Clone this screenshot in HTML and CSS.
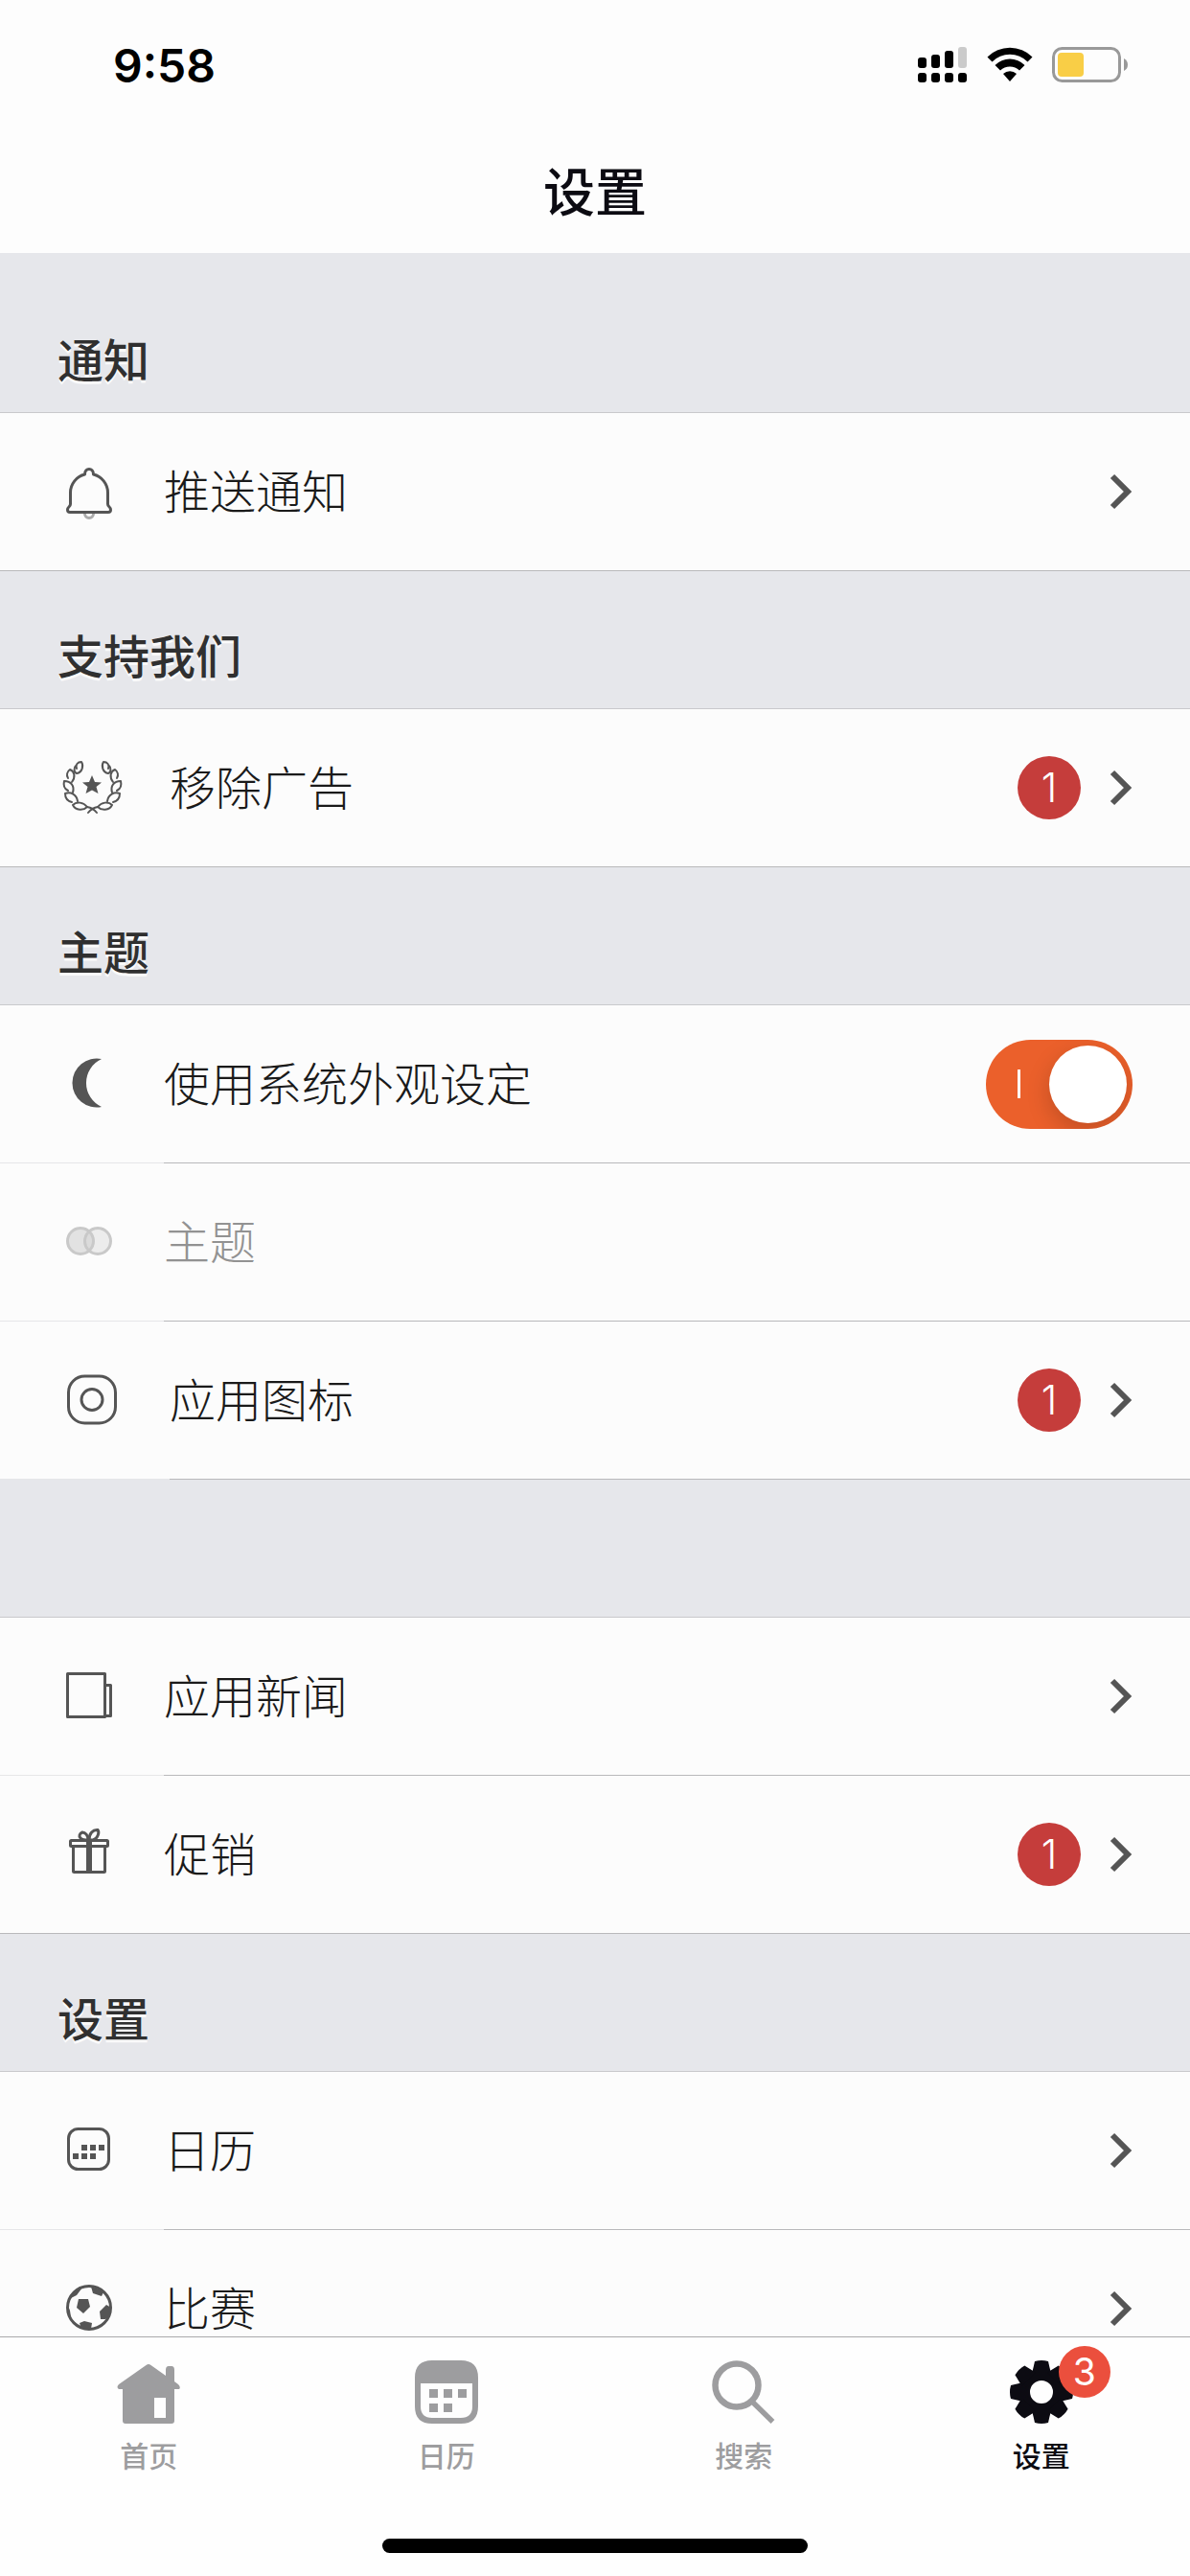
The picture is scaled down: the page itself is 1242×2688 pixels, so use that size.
FILE: index.html
```html
<!DOCTYPE html>
<html lang="zh-CN">

<head>
    <meta charset="UTF-8">
    <meta name="viewport" content="width=device-width, initial-scale=1.0">
    <title>设置</title>
    <link rel="stylesheet" href="styles.css">
</head>

<body>
    <header class="top">
        <div class="status">
            <span class="time">9:58</span>
            <div class="status-icons">
                <svg class="signal" width="52" height="38" viewBox="0 0 52 38" aria-hidden="true">
                    <rect x="0" y="11" width="9" height="11" rx="3" />
                    <rect x="14" y="8" width="9" height="14" rx="3" />
                    <rect x="28" y="4" width="9" height="18" rx="3" />
                    <rect x="42" y="0" width="9" height="22" rx="3" fill="#cbcbcb" />
                    <rect x="0" y="27" width="9" height="10" rx="3" />
                    <rect x="14" y="27" width="9" height="10" rx="3" />
                    <rect x="28" y="27" width="9" height="10" rx="3" />
                    <rect x="42" y="27" width="9" height="10" rx="3" />
                </svg>
                <svg class="wifi" width="48" height="38" viewBox="0 0 48 38" aria-hidden="true">
                    <path d="M0.500 10.500 A33.500 33.500 0 0 1 47.500 10.500 L42.500 15.500 A26 26 0 0 0 5.500 15.500 Z" />
                    <path d="M8.500 19 A22 22 0 0 1 39.500 19 L34 24.500 A14.500 14.500 0 0 0 14 24.500 Z" />
                    <path d="M17 28 A10.500 10.500 0 0 1 31 28 L24 36 Z" />
                </svg>
                <svg class="battery" width="80" height="38" viewBox="0 0 80 38" aria-hidden="true">
                    <rect x="1.500" y="1.500" width="69" height="34" rx="9" fill="none" stroke="#999" stroke-width="3" />
                    <rect x="6" y="6" width="27" height="25" rx="4" fill="#f9ce46" />
                    <path d="M75 12 Q79 14 79 18.500 Q79 23 75 25 Z" fill="#999" />
                </svg>
            </div>
        </div>
        <h1 class="title">设置</h1>
    </header>

    <main class="content">
        <section>
            <h2 class="section-title first">通知</h2>
            <ul class="list">
                <li>
                    <a class="row" href="#push">
                        <span class="icon">
                            <svg width="66" height="66" viewBox="0 0 66 66" fill="none" stroke="#555" stroke-width="3" stroke-linejoin="round" aria-hidden="true">
                                <path d="M28.500 15 C28.500 7.500 37.500 7.500 37.500 15 C46 17 52.500 25 52.500 34 V46 C52.500 49 55.500 48.500 55.500 52 Q55.500 54.500 53 54.500 H13 Q10.500 54.500 10.500 52 C10.500 48.500 13.500 49 13.500 46 V34 C13.500 25 20 17 28.500 15 Z" />
                                <path d="M28.500 56 A4.500 4.500 0 0 0 37.500 56" stroke="#aaa" />
                            </svg>
                        </span>
                        <span class="body">
                            <span class="label">推送通知</span>
                            <svg class="chevron" width="24" height="38" viewBox="0 0 24 38" aria-hidden="true"><path d="M3 3 L19 19 L3 35" /></svg>
                        </span>
                    </a>
                </li>
            </ul>
        </section>

        <section>
            <h2 class="section-title">支持我们</h2>
            <ul class="list">
                <li>
                    <a class="row wide" href="#ads">
                        <span class="icon">
                            <svg width="72" height="72" viewBox="0 0 72 72" fill="none" stroke="#555" stroke-width="2" stroke-linecap="round" stroke-linejoin="round" aria-hidden="true">
                                <g id="branch">
                                    <path d="M20 16 C18.500 12 21 9 25 9 C27.500 13 26 20 20 21 C17 20 16.500 15 20 12" />
                                    <path d="M11 26 C9 23 10 19 13 17 C18 19 19 25 15 30" />
                                    <path d="M11 39 C7 37 6 33 7 29 C14 29 18 34 16 41" />
                                    <path d="M15 51 C11 50 8 47 8 42 C14 40 20 43 21 50" />
                                    <path d="M16 54 C20 50 27 51 31 56 C27 60 19 60 16 54 Z" />
                                    <path d="M31 56 Q37 57 41 62" />
                                </g>
                                <use href="#branch" transform="translate(73 0) scale(-1 1)" />
                                <path fill="#555" stroke="none" d="M36 23 L39 30 L46 30.500 L40.500 35 L42.500 42 L36 38.500 L29.500 42 L31.500 35 L26 30.500 L33 30 Z" />
                            </svg>
                        </span>
                        <span class="body">
                            <span class="label">移除广告</span>
                            <span class="badge">1</span>
                            <svg class="chevron" width="24" height="38" viewBox="0 0 24 38" aria-hidden="true"><path d="M3 3 L19 19 L3 35" /></svg>
                        </span>
                    </a>
                </li>
            </ul>
        </section>

        <section>
            <h2 class="section-title">主题</h2>
            <ul class="list open-end">
                <li>
                    <label class="row" for="system-look">
                        <span class="icon">
                            <svg width="66" height="66" viewBox="0 0 66 66" aria-hidden="true">
                                <path fill="#555" d="M46 7 A25.500 25.500 0 1 0 46 57 A27.500 27.500 0 0 1 46 7 Z" />
                            </svg>
                        </span>
                        <span class="body">
                            <span class="label">使用系统外观设定</span>
                            <input class="switch" type="checkbox" role="switch" id="system-look" checked>
                        </span>
                    </label>
                </li>
                <li>
                    <button class="row" type="button" disabled>
                        <span class="icon">
                            <svg width="66" height="66" viewBox="0 0 66 66" stroke="#555" stroke-width="3" aria-hidden="true">
                                <g opacity="0.3">
                                    <circle cx="24" cy="32" r="13.500" fill="#555" fill-opacity="0.500" />
                                    <circle cx="42" cy="32" r="13.500" fill="#555" fill-opacity="0.300" />
                                </g>
                            </svg>
                        </span>
                        <span class="body">
                            <span class="label">主题</span>
                        </span>
                    </button>
                </li>
                <li>
                    <a class="row wide" href="#app-icon">
                        <span class="icon">
                            <svg width="72" height="72" viewBox="0 0 72 72" fill="none" stroke="#555" stroke-width="3" aria-hidden="true">
                                <rect x="11.500" y="11" width="49" height="49" rx="17" />
                                <circle cx="36" cy="35.500" r="11" />
                            </svg>
                        </span>
                        <span class="body">
                            <span class="label">应用图标</span>
                            <span class="badge">1</span>
                            <svg class="chevron" width="24" height="38" viewBox="0 0 24 38" aria-hidden="true"><path d="M3 3 L19 19 L3 35" /></svg>
                        </span>
                    </a>
                </li>
            </ul>
        </section>

        <section>
            <div class="section-title"></div>
            <ul class="list">
                <li>
                    <a class="row" href="#news">
                        <span class="icon">
                            <svg width="66" height="66" viewBox="0 0 66 66" fill="none" stroke="#555" stroke-width="3" stroke-linejoin="round" aria-hidden="true">
                                <rect x="10.500" y="9.500" width="39" height="45" />
                                <path d="M50 21.500 H55.500 V53.500 H50" />
                            </svg>
                        </span>
                        <span class="body">
                            <span class="label">应用新闻</span>
                            <svg class="chevron" width="24" height="38" viewBox="0 0 24 38" aria-hidden="true"><path d="M3 3 L19 19 L3 35" /></svg>
                        </span>
                    </a>
                </li>
                <li>
                    <a class="row" href="#promo">
                        <span class="icon">
                            <svg width="66" height="66" viewBox="0 0 66 66" fill="none" stroke="#555" stroke-width="3" aria-hidden="true">
                                <rect x="13.500" y="18.500" width="39" height="6" rx="1" />
                                <rect x="16.500" y="24.500" width="33" height="27" rx="1" />
                                <path d="M33 18 V52" stroke-width="6" />
                                <path d="M32 18 C32 13 29 10 26 10 C23 11 22 14 24 16 C26 18 29 18 32 18 Z" />
                                <path d="M33 18 C33 11 37 7 42 7.500 C44 10 42 17 37 18 Z" />
                            </svg>
                        </span>
                        <span class="body">
                            <span class="label">促销</span>
                            <span class="badge">1</span>
                            <svg class="chevron" width="24" height="38" viewBox="0 0 24 38" aria-hidden="true"><path d="M3 3 L19 19 L3 35" /></svg>
                        </span>
                    </a>
                </li>
            </ul>
        </section>

        <section>
            <h2 class="section-title">设置</h2>
            <ul class="list">
                <li>
                    <a class="row" href="#calendar-settings">
                        <span class="icon">
                            <svg width="66" height="66" viewBox="0 0 66 66" aria-hidden="true">
                                <rect x="11.500" y="10.500" width="42" height="42" rx="10" fill="none" stroke="#555" stroke-width="3" />
                                <path fill="#555" d="M25 27h6v6h-6z M34 27h6v6h-6z M43 27h6v6h-6z M16 36h6v6h-6z M25 36h6v6h-6z M34 36h6v6h-6z" />
                            </svg>
                        </span>
                        <span class="body">
                            <span class="label">日历</span>
                            <svg class="chevron" width="24" height="38" viewBox="0 0 24 38" aria-hidden="true"><path d="M3 3 L19 19 L3 35" /></svg>
                        </span>
                    </a>
                </li>
                <li>
                    <a class="row" href="#matches">
                        <span class="icon">
                            <svg width="66" height="66" viewBox="0 0 66 66" fill="#555" aria-hidden="true">
                                <circle cx="33" cy="32" r="22.500" fill="none" stroke="#555" stroke-width="3" />
                                <path d="M22 23 H32 L34 31 L27 38 L20 32 Z" />
                                <path d="M51 29 L56 32 L54 42 L50 44 H45 L44 36 Z" />
                                <path d="M35 10 L47 14 L48 16 L46 20 L37 17 Z" />
                                <path d="M15 17 L23 10 L26 11 L20 19 L14 22 Z" />
                                <path d="M23 48 L28 46 L36 48 L35 54 L25 54 Z" />
                                <path d="M10 28 L13 35 L14 42 L11 40 Z" />
                            </svg>
                        </span>
                        <span class="body">
                            <span class="label">比赛</span>
                            <svg class="chevron" width="24" height="38" viewBox="0 0 24 38" aria-hidden="true"><path d="M3 3 L19 19 L3 35" /></svg>
                        </span>
                    </a>
                </li>
            </ul>
        </section>
    </main>

    <footer class="bottom">
        <nav class="tabs">
            <a class="tab" href="#home">
                <svg width="66" height="66" viewBox="0 0 66 66" fill="currentColor" aria-hidden="true">
                    <path fill-rule="evenodd" d="M30.500 5 Q33 3 35.500 5 L51 16 V10 Q51 6 54 6 H57 Q60 6 60 10 V22 L64 25 Q67 28 65 30 H60 V63 Q60 66 57 66 H9 Q6 66 6 63 V30 H2 Q-1 28 2 25 Z M39 39 V60 H51 V39 Z" />
                </svg>
                <span>首页</span>
            </a>
            <a class="tab" href="#calendar">
                <svg width="66" height="66" viewBox="0 0 66 66" fill="currentColor" aria-hidden="true">
                    <path fill-rule="evenodd" d="M18 0 H48 Q66 0 66 18 V48 Q66 66 48 66 H18 Q0 66 0 48 V18 Q0 0 18 0 Z M6 24 V48 Q6 60 18 60 H48 Q60 60 60 48 V24 Z" />
                    <path d="M15 30h9v9h-9z M30 30h9v9h-9z M45 30h9v9h-9z M15 45h9v9h-9z M30 45h9v9h-9z" />
                </svg>
                <span>日历</span>
            </a>
            <a class="tab" href="#search">
                <svg width="66" height="66" viewBox="0 0 66 66" fill="none" stroke="currentColor" aria-hidden="true">
                    <circle cx="26" cy="26" r="22.500" stroke-width="6.500" />
                    <path d="M42 43 L63.500 64" stroke-width="5.500" />
                </svg>
                <span>搜索</span>
            </a>
            <a class="tab active" href="#settings" aria-current="page">
                <svg width="66" height="66" viewBox="0 0 66 66" fill="currentColor" aria-hidden="true">
                    <defs>
                        <path id="tooth" d="M23 14 L26 1 Q33 -1 40 1 L43 14 Z" />
                    </defs>
                    <circle cx="33" cy="33" r="18" fill="none" stroke="currentColor" stroke-width="12" />
                    <use href="#tooth" />
                    <use href="#tooth" transform="rotate(45 33 33)" />
                    <use href="#tooth" transform="rotate(90 33 33)" />
                    <use href="#tooth" transform="rotate(135 33 33)" />
                    <use href="#tooth" transform="rotate(180 33 33)" />
                    <use href="#tooth" transform="rotate(225 33 33)" />
                    <use href="#tooth" transform="rotate(270 33 33)" />
                    <use href="#tooth" transform="rotate(315 33 33)" />
                </svg>
                <span>设置</span>
                <span class="tab-badge">3</span>
            </a>
        </nav>
        <div class="home-bar"></div>
    </footer>
</body>

</html>
```
FILE: styles.css
```css
* {
    box-sizing: border-box;
}

body {
    margin: 0;
    height: 100vh;
    display: flex;
    flex-direction: column;
    overflow: hidden;
    background-color: #fdfdfd;
    color: #1a1a1a;
    font-family: Inter, "Noto Sans CJK SC", sans-serif;
}

/* Cabecera */
.top {
    flex: none;
}

.status {
    height: 136px;
    padding: 0 64px 0 118px;
    display: flex;
    align-items: center;
    justify-content: space-between;
}

.time {
    color: #000;
    font-size: 48px;
    font-weight: 600;
}

.status-icons {
    display: flex;
    align-items: center;
    gap: 20px;
}

.title {
    margin: 0;
    padding: 30px 0 34px;
    color: #0c0b12;
    font-family: "Noto Sans CJK SC", sans-serif;
    font-size: 54px;
    font-weight: 500;
    line-height: 64px;
    text-align: center;
}

/* Lista */
.content {
    flex: 1;
    min-height: 0;
    overflow-y: auto;
    scrollbar-width: none;
    background-color: #e6e7eb;
}

.section-title {
    height: 144px;
    margin: 0;
    padding: 0 60px 27px;
    display: flex;
    align-items: flex-end;
    border-bottom: 1px solid #c9c9cc;
    color: #303030;
    font-family: "Noto Sans CJK SC", sans-serif;
    font-size: 48px;
    font-weight: 500;
    line-height: 60px;
    text-shadow: 0 3px 0 #fafafa;
}

.section-title.first {
    height: 167px;
}

.list {
    margin: 0;
    padding: 0;
    list-style: none;
}

.row {
    width: 100%;
    height: 165px;
    padding: 0;
    display: flex;
    border: none;
    background-color: #fcfcfc;
    color: #1a1a1a;
    font-family: "Noto Sans CJK SC", sans-serif;
    font-size: 48px;
    font-weight: 300;
    line-height: 60px;
    text-align: left;
    text-decoration: none;
}

.icon {
    flex: none;
    width: 171px;
    padding-left: 60px;
    display: flex;
    align-items: center;
    border-bottom: 1px solid #e6e6e8;
}

.wide .icon {
    width: 177px;
}

.body {
    flex: 1;
    padding-right: 60px;
    display: flex;
    align-items: center;
    border-bottom: 1px solid #b9b9bb;
}

.list:not(.open-end) li:last-child .icon {
    border-bottom-color: #b9b9bb;
}

.label {
    flex: 1;
    padding-bottom: 6px;
}

.row:disabled .label {
    color: #929292;
}

.chevron {
    fill: none;
    stroke: #555;
    stroke-width: 6;
}

.badge {
    width: 66px;
    height: 66px;
    margin-right: 30px;
    border-radius: 50%;
    background-color: #c53d3b;
    color: #fff;
    font-family: Inter, sans-serif;
    font-size: 42px;
    font-weight: 300;
    line-height: 66px;
    text-align: center;
}

.switch {
    appearance: none;
    width: 153px;
    height: 93px;
    margin: 0;
    padding: 0 6px 0 33px;
    display: flex;
    align-items: center;
    justify-content: space-between;
    border-radius: 47px;
    background-color: #ccc;
    overflow: hidden;
    cursor: pointer;
}

.switch:checked {
    background-color: #eb602b;
}

.switch::before {
    content: "";
    width: 3px;
    height: 30px;
    background-color: #fff;
}

.switch::after {
    content: "";
    width: 81px;
    height: 81px;
    border-radius: 50%;
    background-color: #fff;
    box-shadow: 0 9px 24px rgba(0, 0, 0, 0.18);
}

.switch:not(:checked) {
    flex-direction: row-reverse;
    padding: 0 33px 0 6px;
}

/* Barra inferior */
.bottom {
    flex: none;
    height: 250px;
    padding-bottom: 24px;
    display: flex;
    flex-direction: column;
    justify-content: space-between;
    align-items: center;
    border-top: 1px solid #a9a9ab;
    background-color: #fefefe;
}

.tabs {
    width: 100%;
    padding-top: 24px;
    display: grid;
    grid-template-columns: repeat(4, 1fr);
}

.tab {
    position: relative;
    display: flex;
    flex-direction: column;
    align-items: center;
    gap: 16px;
    color: #9d9d9f;
    font-family: "Noto Sans CJK SC", sans-serif;
    font-size: 30px;
    font-weight: 500;
    line-height: 32px;
    text-decoration: none;
}

.tab.active {
    color: #0c0b12;
}

.tab-badge {
    position: absolute;
    top: -15px;
    left: calc(50% + 18px);
    width: 54px;
    height: 54px;
    border-radius: 50%;
    background-color: #eb4f3d;
    color: #fff;
    font-family: Inter, sans-serif;
    font-size: 39px;
    font-weight: 400;
    line-height: 54px;
    text-align: center;
}

.home-bar {
    width: 444px;
    height: 15px;
    border-radius: 8px;
    background-color: #000;
}
```
